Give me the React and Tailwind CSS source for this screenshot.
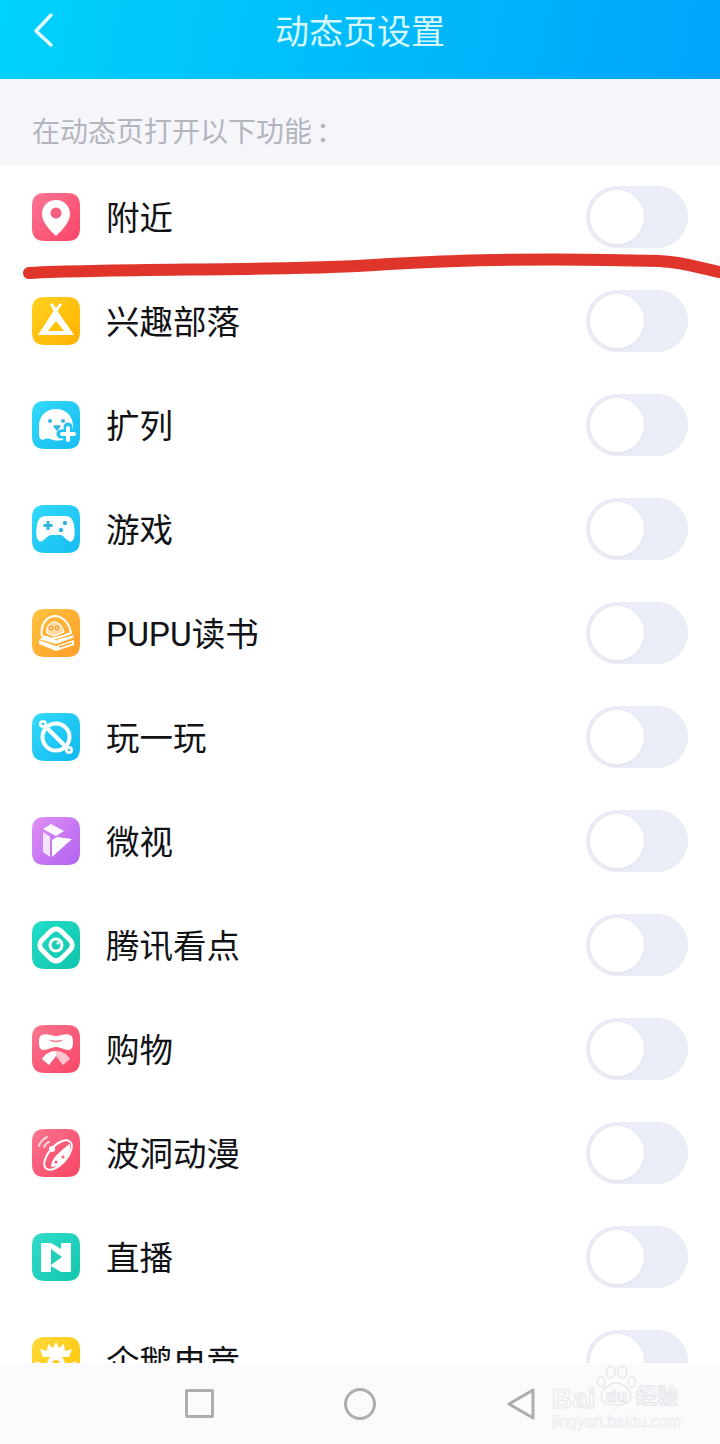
import { useId } from 'react';

const FONT = "font-['Roboto','Noto_Sans_CJK_SC',sans-serif]";

function Tile({ from, to, children }) {
  const id = useId();
  return (
    <svg width="48" height="48" viewBox="0 0 48 48" className="shrink-0">
      <defs>
        <linearGradient id={id} x1="0" y1="0" x2="1" y2="1">
          <stop offset="0" stopColor={from} />
          <stop offset="1" stopColor={to} />
        </linearGradient>
      </defs>
      <path d="M13 0h22c9 0 13 4 13 13v22c0 9-4 13-13 13H13C4 48 0 44 0 35V13C0 4 4 0 13 0z" fill={`url(#${id})`} />
      {children}
    </svg>
  );
}

const PinIcon = () => (
  <Tile from="#fb7595" to="#fb4465">
    <path d="M24 7c-8 0-14 6-14 14C10 30 19 38 24 43c5-5 14-13 14-22C38 13 32 7 24 7z" fill="#fff" />
    <circle cx="24" cy="20" r="5.500" fill="#f65f7f" />
  </Tile>
);

const TentIcon = () => (
  <Tile from="#ffd21f" to="#ffb000">
    <path d="M20 6l4 5 4-5 2 1.500-4.500 6.500L42 38H6l15.500-24L18 7.500z" fill="#fff" />
    <path d="M24 24l8 10H16z" fill="#ffc107" />
  </Tile>
);

const BubbleIcon = () => (
  <Tile from="#33daf9" to="#15bcf2">
    <path d="M24 8c-10 0-17 7-17 17v9c0 4 3 6 6 4 3-1 5 0 8 1 4 1 9 1 13-2 4-3 7-6 7-12C41 15 34 8 24 8z" fill="#fff" />
    <circle cx="18" cy="20" r="2" fill="#35b9dc" />
    <circle cx="31" cy="20" r="2" fill="#35b9dc" />
    <path d="M22 25h6l-3 4z" fill="#35b9dc" stroke="#35b9dc" strokeLinejoin="round" strokeWidth="1.500" />
    <path d="M36 26v14M29 33h14" stroke="#1fc4f4" strokeWidth="9" strokeLinecap="round" />
    <path d="M36 27v12M30 33h12" stroke="#fff" strokeWidth="4" strokeLinecap="round" />
  </Tile>
);

const GameIcon = () => (
  <Tile from="#33daf9" to="#15bcf2">
    <path d="M14 11h20c5 0 7 4 8 9 1 6 1 13-1 15-2 3-5 1-8-2-2-2-3-3-5-3h-8c-3 0-4 1-6 3-3 3-6 5-8 2-2-2-2-9-1-15 1-5 3-9 9-9z" fill="#fff" />
    <path d="M16 16v9M11.500 20.500h9" stroke="#2fb8df" strokeWidth="3" />
    <circle cx="33" cy="18" r="2.200" fill="#2fb8df" />
    <circle cx="29" cy="25" r="2.200" fill="#2fb8df" />
  </Tile>
);

const BookIcon = () => (
  <Tile from="#ffc340" to="#ff9d28">
    <path d="M10 27c-2-9 3-19 12-20 9 0 15 7 17 17l-8 3-11 3z" fill="none" stroke="#fff" strokeWidth="2" />
    <path d="M15 24c-1-4 1-8 3-9 2-3 7-3 9 0 3 2 4 5 5 8l-10 4z" fill="#ffd9a0" stroke="#fff" strokeWidth="1.200" />
    <circle cx="19" cy="19" r="1.800" fill="none" stroke="#f39c2c" strokeWidth="1.200" />
    <circle cx="25" cy="19" r="1.800" fill="none" stroke="#f39c2c" strokeWidth="1.200" />
    <path d="M7 30l8-3 9 4 18-5-1 3-17 6z" fill="#fff" />
    <path d="M7 31l17 6 18-6v5l-18 6-17-7z" fill="#fff" />
    <path d="M27 38l13-4" stroke="#f9a431" strokeWidth="1.400" />
  </Tile>
);

const PlanetIcon = () => (
  <Tile from="#33daf9" to="#0fb8f0">
    <circle cx="24" cy="24" r="13.500" fill="none" stroke="#fff" strokeWidth="4" />
    <path d="M12 12l24 24" stroke="#fff" strokeWidth="4" />
    <circle cx="11" cy="11" r="4" fill="#fff" />
    <circle cx="37" cy="37" r="4" fill="#fff" />
    <circle cx="11" cy="11" r="1.300" fill="#2fc2ea" />
    <circle cx="37" cy="37" r="1.300" fill="#2fc2ea" />
  </Tile>
);

const PlayIcon = () => (
  <Tile from="#e08ff6" to="#b062ef">
    <path d="M11 12l8-5 13 7-8 5z" fill="#fff" opacity=".95" />
    <path d="M11 15l7 4.500V40l-7-5z" fill="#fff" opacity=".8" />
    <path d="M20 23l5-3 15 2-20 18z" fill="#fff" />
  </Tile>
);

const EyeIcon = () => (
  <Tile from="#22ddc8" to="#11c4ab">
    <path d="M24 8c2 0 4 1 6 3l8 8c3 3 3 7 0 10l-8 8c-4 4-8 4-12 0l-8-8c-3-3-3-7 0-10l8-8c2-2 4-3 6-3z" fill="none" stroke="#fff" strokeWidth="5" />
    <circle cx="24" cy="24" r="7.500" fill="#fff" />
    <circle cx="24" cy="24" r="4.500" fill="#1fcdb6" />
    <circle cx="26" cy="22" r="1.500" fill="#fff" />
  </Tile>
);

const GiftIcon = () => (
  <Tile from="#fb7590" to="#f84665">
    <path d="M10 10c5-2 9 1 14 1s9-3 14-1c3 1 3 5 3 8s-1 7-4 7c-5 0-8-3-13-3s-8 3-13 3c-3 0-4-4-4-7s0-7 3-8z" fill="#fff" />
    <path d="M18 15c3 2 9 2 12 0" stroke="#f76e86" strokeWidth="1.500" fill="none" />
    <path d="M24 26c-6 0-11 3-14 8l7 6 7-9z" fill="#fff" />
    <path d="M24 26c6 0 11 3 14 8l-7 6-7-9z" fill="#ffc6d0" />
  </Tile>
);

const AnimeIcon = () => (
  <Tile from="#fb7590" to="#f84462">
    <path d="M7 17c1-4 4-7 8-9" stroke="#ffd3db" strokeWidth="2" fill="none" strokeLinecap="round" />
    <path d="M12 18c1-2 2-4 5-5" stroke="#ffd3db" strokeWidth="2" fill="none" strokeLinecap="round" />
    <ellipse cx="26" cy="26" rx="9" ry="18" transform="rotate(42 26 26)" fill="none" stroke="#fff" strokeWidth="2" />
    <path d="M38 15c1 7-2 13-8 19-4 3-8 4-11 4 0-5 3-10 8-14 3-3 7-7 11-9z" fill="#fff" />
    <circle cx="20" cy="20" r="3" fill="#fff" />
    <circle cx="24" cy="33" r="1.600" fill="#f7607c" />
    <circle cx="31" cy="28" r="1.600" fill="#f7607c" />
  </Tile>
);

const LiveIcon = () => (
  <Tile from="#2fdcc9" to="#14c6ae">
    <path d="M9 10h10l10 6v-6h10v29H29l-10-6v6H9z" fill="#fff" />
    <path d="M19 16l11 8-11 8z" fill="#22cfba" />
  </Tile>
);

const SunIcon = () => (
  <Tile from="#ffd93d" to="#ffc400">
    <path d="M24 5l3 6 5-4 1 7 7-2-3 8H11l-3-8 7 2 1-7 5 4z" fill="#fff" />
    <circle cx="24" cy="27" r="9" fill="#fff" />
    <circle cx="24" cy="27" r="4" fill="#ffc928" />
    <path d="M3 24l9 3-4 6zM45 24l-9 3 4 6z" fill="#fff" />
  </Tile>
);

const ROWS = [
  { label: '附近', Icon: PinIcon },
  { label: '兴趣部落', Icon: TentIcon },
  { label: '扩列', Icon: BubbleIcon },
  { label: '游戏', Icon: GameIcon },
  { label: 'PUPU读书', Icon: BookIcon },
  { label: '玩一玩', Icon: PlanetIcon },
  { label: '微视', Icon: PlayIcon },
  { label: '腾讯看点', Icon: EyeIcon },
  { label: '购物', Icon: GiftIcon },
  { label: '波洞动漫', Icon: AnimeIcon },
  { label: '直播', Icon: LiveIcon },
  { label: '企鹅电竞', Icon: SunIcon },
];

function Toggle() {
  return (
    <div className="flex h-[62px] w-[102px] shrink-0 items-center rounded-full bg-[#eaecf6] pl-[4px]">
      <div className="h-[54px] w-[54px] rounded-full bg-white shadow-[0_0_0_1px_#e8e9f0,0_1px_3px_#dcdee8]" />
    </div>
  );
}

function Row({ label, Icon }) {
  return (
    <div className="flex h-[104px] shrink-0 items-center pl-[32px] pr-[32px]">
      <Icon />
      <span className="ml-[26px] flex-1 pt-[4px] text-[33.500px] leading-none text-[#111216]">{label}</span>
      <Toggle />
    </div>
  );
}

function Watermark() {
  return (
    <div className="absolute left-[552px] top-[1365px] h-[70px] w-[160px] select-none">
      <svg width="42" height="42" viewBox="0 0 40 40" className="absolute left-[43px] top-0" fill="none" stroke="#e6e6ea" strokeWidth="1.300">
        <ellipse cx="15" cy="7" rx="4" ry="5.500" />
        <ellipse cx="26" cy="7" rx="4.500" ry="5.500" />
        <ellipse cx="6" cy="16" rx="3.500" ry="5" />
        <ellipse cx="35" cy="16" rx="3.500" ry="5" />
        <path d="M20 17c-6 0-14 6-14 13 0 5 5 8 14 8s14-3 14-8c0-7-8-13-14-13z" />
      </svg>
      <span className="absolute left-0 top-[20px] font-['Liberation_Sans',sans-serif] text-[28px] font-bold leading-none text-transparent [-webkit-text-stroke:1px_#e6e6ea]">Bai</span>
      <span className="absolute left-[54px] top-[23px] font-['Liberation_Sans',sans-serif] text-[17px] font-bold leading-none text-transparent [-webkit-text-stroke:0.800px_#e2e2e6]">du</span>
      <span className="absolute left-[84px] top-[21px] text-[21px] font-bold leading-none text-transparent [-webkit-text-stroke:0.800px_#e2e2e6]">经验</span>
      <span className="absolute left-0 top-[49px] whitespace-nowrap font-['Liberation_Sans',sans-serif] text-[16px] leading-none text-transparent [-webkit-text-stroke:0.600px_#e8e8ec]">jingyan.baidu.com</span>
    </div>
  );
}

export default function App() {
  return (
    <div className={`relative flex h-[1444px] w-[720px] flex-col overflow-hidden bg-white ${FONT}`}>
      <header className="relative flex h-[79px] shrink-0 items-center justify-center bg-[linear-gradient(100deg,#00d2fb,#00a4fa)] pb-[15px]">
        <svg width="24" height="36" viewBox="0 0 24 36" className="absolute left-[32px] top-[12px]" fill="none" stroke="#e6fbff" strokeWidth="3.500" strokeLinecap="round" strokeLinejoin="round">
          <path d="M19 3L4 19l15 14" />
        </svg>
        <h1 className="text-[34px] font-normal leading-none text-[#d8f8ff]">动态页设置</h1>
      </header>

      <div className="flex h-[86px] shrink-0 items-center bg-[#f5f6fa] pl-[32px] pt-[22px] text-[28px] leading-none text-[#b3b5be]">
        在动态页打开以下功能<span className="ml-[4px]">：</span>
      </div>

      <div className="flex min-h-0 flex-1 flex-col overflow-hidden">
        {ROWS.map((row) => (
          <Row key={row.label} {...row} />
        ))}
      </div>

      <nav className="flex h-[81px] shrink-0 items-center justify-center gap-[130px] bg-[#fbfafd] pl-[1px]">
        <div className="h-[29px] w-[29px] rounded-[2px] border-[3px] border-[#adadb1]" />
        <div className="h-[32px] w-[32px] rounded-full border-[3px] border-[#adadb1]" />
        <svg width="30" height="34" viewBox="0 0 30 34" fill="none" stroke="#adadb1" strokeWidth="3" strokeLinejoin="round">
          <path d="M27 3v28L3 17z" />
        </svg>
      </nav>

      <svg width="720" height="40" viewBox="0 0 720 40" className="absolute left-0 top-[245px]" fill="none">
        <path d="M29 28c60-3 130-3 210-4 60-1 100-1 150-5 70-4 170-6 270-3 25 1 40 7 61 11" stroke="#e0352b" strokeWidth="12" strokeLinecap="round" />
      </svg>

      <Watermark />
    </div>
  );
}
